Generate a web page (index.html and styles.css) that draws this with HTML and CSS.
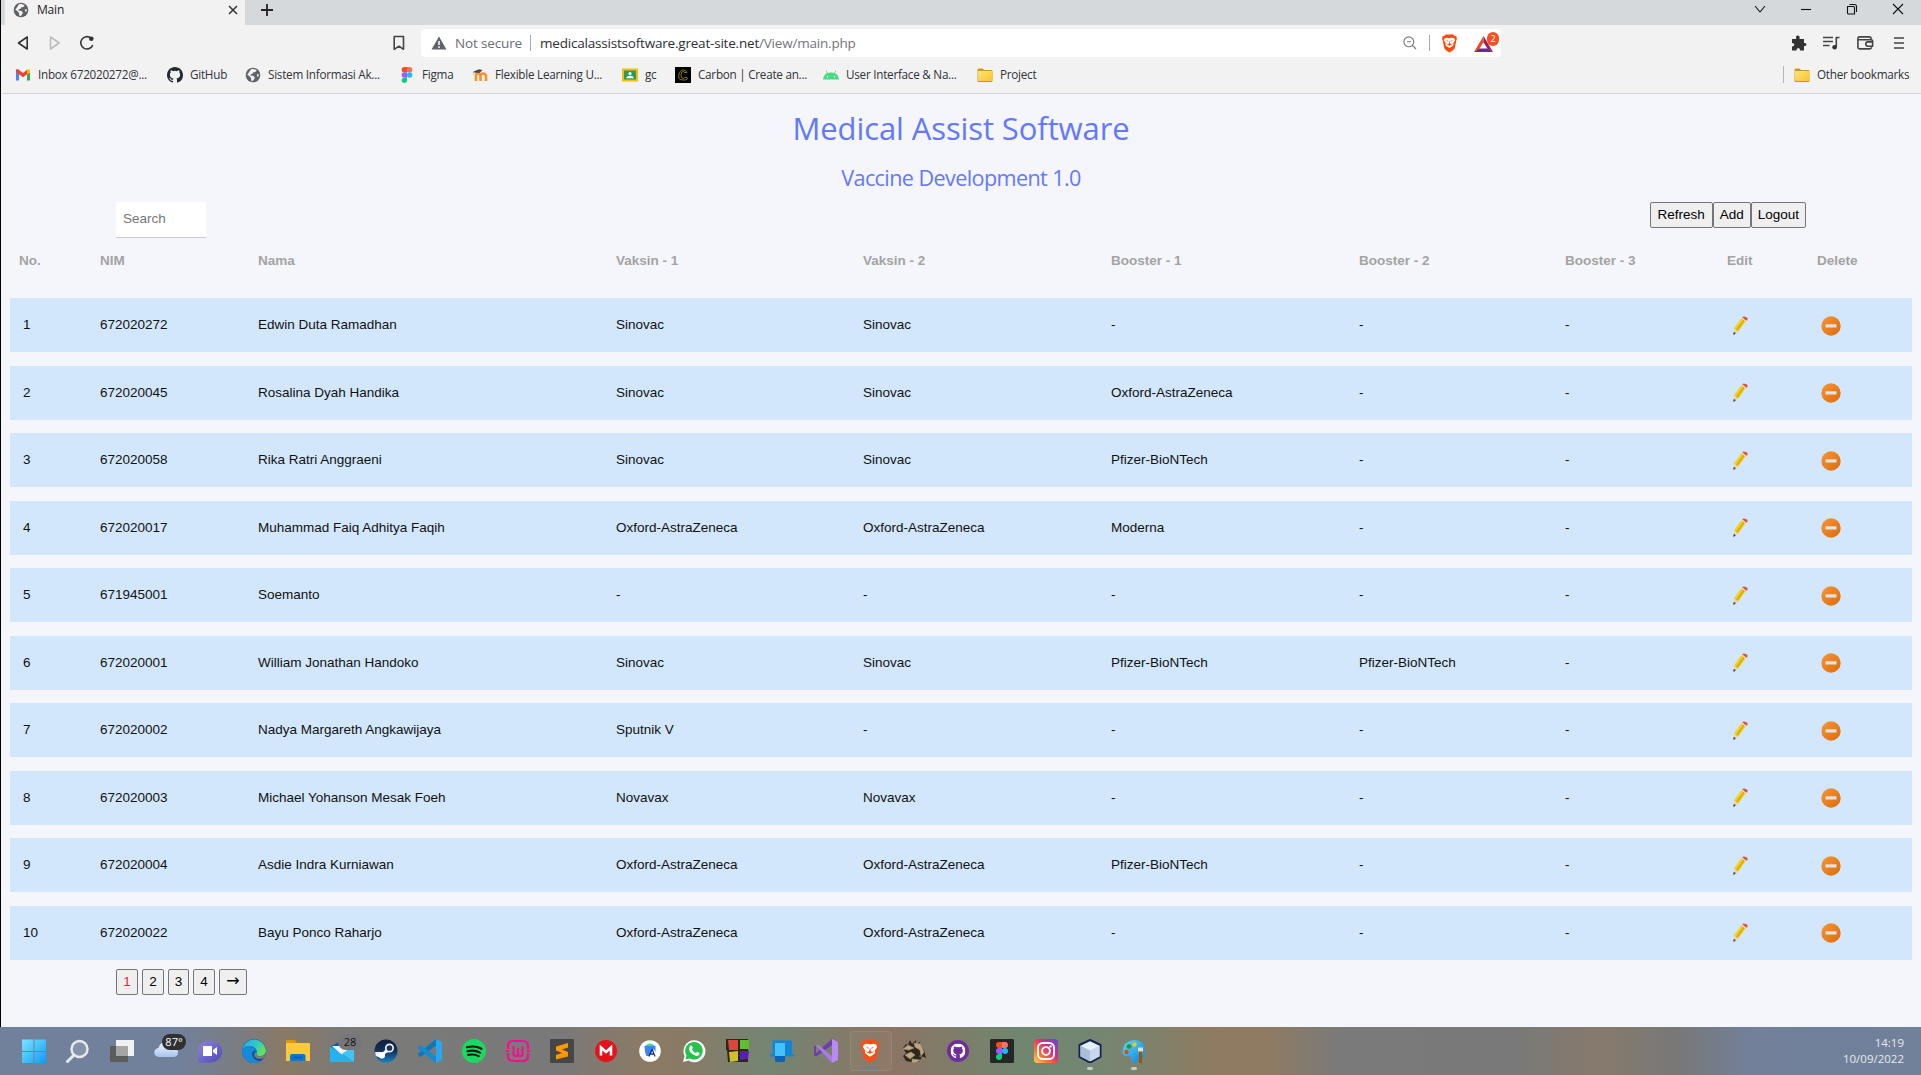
FILE: index.html
```html
<!DOCTYPE html>
<html lang="id">
<head>
<meta charset="utf-8">
<title>Main</title>
<link rel="stylesheet" href="styles.css">
</head>
<body>
<svg class="defs" width="0" height="0">
  <defs>
    <linearGradient id="gOrange" x1="0" y1="0" x2="1" y2="1"><stop offset="0" stop-color="#f5973a"/><stop offset="1" stop-color="#dd6a08"/></linearGradient>
    <linearGradient id="gFolder" x1="0" y1="0" x2="1" y2="1"><stop offset="0" stop-color="#ffe27a"/><stop offset="1" stop-color="#f6c62f"/></linearGradient>
    <linearGradient id="gWin" x1="0" y1="0" x2="1" y2="1"><stop offset="0" stop-color="#7fe3ff"/><stop offset="1" stop-color="#0a9df5"/></linearGradient>
    <linearGradient id="gEdge" x1="0" y1="0" x2="1" y2=".4"><stop offset="0" stop-color="#2aa7e6"/><stop offset=".6" stop-color="#33c6c8"/><stop offset="1" stop-color="#62e05a"/></linearGradient>
    <linearGradient id="gInsta" x1="0" y1="1" x2="1" y2="0"><stop offset="0" stop-color="#ffd35a"/><stop offset=".3" stop-color="#f9762e"/><stop offset=".6" stop-color="#d62f7e"/><stop offset="1" stop-color="#5a4bd6"/></linearGradient>
    <linearGradient id="gChat" x1="0" y1="0" x2="1" y2="1"><stop offset="0" stop-color="#8f86dd"/><stop offset="1" stop-color="#5048b5"/></linearGradient>
    <linearGradient id="gSteam" x1="0" y1="0" x2="0" y2="1"><stop offset="0" stop-color="#111d3c"/><stop offset=".5" stop-color="#12305c"/><stop offset="1" stop-color="#1486bd"/></linearGradient>
    <linearGradient id="gCloud" x1="0" y1="0" x2="0" y2="1"><stop offset="0" stop-color="#f3f8ff"/><stop offset="1" stop-color="#a9c4ee"/></linearGradient>
    <linearGradient id="gPaint" x1="0" y1="0" x2="1" y2="1"><stop offset="0" stop-color="#53dcfa"/><stop offset="1" stop-color="#1280d8"/></linearGradient>
    <symbol id="globe" viewBox="0 0 16 16"><circle cx="8" cy="8" r="7.300" fill="#5f6368"/><path d="M6 2.200c2-.6 4.300 0 5.700 1.300L10 5.200H8.300L7.600 6.800l-2 .6v1.400h2.600l1.600 1.600-.4 1.700-1.700 2-1.600-.5V11L3.700 8.600 2.200 8M13.900 7l-2.200.6.600 1.800 1.100.4" fill="#f2f2f2"/></symbol>
    <symbol id="github" viewBox="0 0 16 16"><path d="M8 0C3.580 0 0 3.580 0 8c0 3.540 2.290 6.530 5.470 7.590.4.070.55-.17.55-.38 0-.19-.01-.82-.01-1.490-2.010.37-2.530-.49-2.690-.94-.09-.23-.48-.94-.82-1.130-.28-.15-.68-.52-.01-.53.63-.01 1.080.58 1.230.82.72 1.210 1.870.87 2.330.66.07-.52.28-.87.51-1.070-1.780-.2-3.640-.89-3.640-3.950 0-.87.31-1.590.82-2.150-.08-.2-.36-1.020.08-2.120 0 0 .67-.21 2.200.82a7.600 7.600 0 0 1 4 0c1.530-1.040 2.200-.82 2.200-.82.44 1.100.16 1.920.08 2.120.51.56.82 1.270.82 2.150 0 3.070-1.870 3.750-3.650 3.950.29.25.54.73.54 1.480 0 1.070-.01 1.930-.01 2.200 0 .21.15.46.55.38A8 8 0 0 0 16 8c0-4.420-3.580-8-8-8z"/></symbol>
    <symbol id="figma" viewBox="0 0 16 24"><path d="M4 0h4v8H4a4 4 0 0 1 0-8z" fill="#f24e1e"/><path d="M8 0h4a4 4 0 0 1 0 8H8z" fill="#ff7262"/><path d="M4 8h4v8H4a4 4 0 0 1 0-8z" fill="#a259ff"/><circle cx="12" cy="12" r="4" fill="#1abcfe"/><path d="M4 16h4v4a4 4 0 1 1-4-4z" fill="#0acf83"/></symbol>
    <symbol id="folder" viewBox="0 0 16 16"><path d="M.5 3Q.5 1.500 2 1.500h3.500L7 3h7.500q1 0 1 1v10q0 1-1 1h-13q-1 0-1-1z" fill="#c99a18"/><path d="M1 4h14.500v9q0 1-1 1h-12.500q-1 0-1-1z" fill="url(#gFolder)"/></symbol>
    <symbol id="brave" viewBox="0 0 16 20"><path d="M4 .5h8l1.500 1.700 1.800.2.500 3.200-.6 1L13.500 15Q13 16.500 8 19.500 3 16.500 2.500 15L.8 6.600.2 5.600.7 2.400l1.800-.2z" fill="#fb4a10"/><path d="M3 4.500 5.500 4 8 4.600l2.500-.6 2.500.5.900 2.200-2 3 .4 1.800-2 1.800L8 14.800l-2.300-1.500-2-1.800.4-1.800-2-3z" fill="#fff"/><path d="m4.500 6.500 2.500.7-.5 1zM11.500 6.500 9 7.200l.5 1zM8 7l.7 3.300 1.300.7-2 1.500-2-1.500 1.300-.7zM5 9.500l1.200 2-.7.600zM11 9.500l-1.200 2 .7.600z" fill="#fb4a10"/></symbol>
    <symbol id="pencil" viewBox="0 0 16 20"><path d="m2 12.600 7.300-10.300 4.300 3L6.300 15.600 2 18.400z" fill="#f3cf22"/><path d="m4 13.900 7.200-10.200 1.400 1L5.400 14.900z" fill="#d9ad00"/><path d="m2 12.600 4.300 3L1.800 18.500z" fill="#ecd5b0"/><path d="m1.600 16 2.300 1-2.400 2.300z" fill="#33383f"/><path d="m9.300 2.300 1.100-1.500 4.300 3-1.100 1.500z" fill="#dfe0e4"/><path d="M10.200 1.200Q11.300-.2 13.900.9t1.400 3.200l-.9.700z" fill="#e4503f"/></symbol>
    <symbol id="minus" viewBox="0 0 20 20"><circle cx="10" cy="10" r="9.700" fill="url(#gOrange)"/><rect x="4.500" y="8.300" width="11" height="3.200" fill="#e4e2e0"/></symbol>
  </defs>
</svg>

<div class="window">
  <header class="tabs">
    <div class="tab">
      <svg class="i16"><use href="#globe"/></svg>
      <span class="tab-title">Main</span>
      <svg width="10" height="10" viewBox="0 0 10 10"><path d="m1 1 8 8M9 1 1 9" stroke="#333" stroke-width="1.500"/></svg>
    </div>
    <svg class="plus" width="12" height="12" viewBox="0 0 12 12"><path d="M6 0v12M0 6h12" stroke="#222" stroke-width="1.800"/></svg>
    <div class="controls">
      <svg width="12" height="12" viewBox="0 0 12 12"><path d="m1 3 5 6 5-6"/></svg>
      <svg width="12" height="12" viewBox="0 0 12 12"><path d="M1 6.500h10"/></svg>
      <svg width="12" height="12" viewBox="0 0 12 12"><path d="M1.500 3.500h6q1 0 1 1v6.500h-6q-1 0-1-1zM3.500 1.500h5q2 0 2 2V9"/></svg>
      <svg width="12" height="12" viewBox="0 0 12 12"><path d="m1 1 10 10M11 1 1 11"/></svg>
    </div>
  </header>

  <nav class="toolbar">
    <div class="nav-buttons">
      <svg width="12" height="16" viewBox="0 0 12 16"><path d="M10.200 2v12L1.500 8z" fill="none" stroke="#333" stroke-width="1.600" stroke-linejoin="round"/></svg>
      <svg width="12" height="16" viewBox="0 0 12 16"><path d="M1.500 2v12l8.700-6z" fill="none" stroke="#bbb" stroke-width="1.600" stroke-linejoin="round"/></svg>
      <svg class="reload" width="16" height="16" viewBox="0 0 16 16"><path d="M12 3.100A6.200 6.200 0 1 0 13.800 10" fill="none" stroke="#333" stroke-width="1.600"/><circle cx="12.300" cy="3.800" r="2.300" fill="#333"/></svg>
    </div>
    <svg class="save" width="12" height="16" viewBox="0 0 12 16"><path d="M1.200 1.500h9.300v12.800L6 11.200l-4.800 3.100z" fill="none" stroke="#444" stroke-width="1.600" stroke-linejoin="round"/></svg>
    <div class="address">
      <svg width="16" height="14" viewBox="0 0 16 14"><path d="M8 .5 15.500 13.500H.5z" fill="#5f6368"/><path d="M8 5v4M8 10.200v1.700" stroke="#fff" stroke-width="1.500"/></svg>
      <span class="insecure">Not secure</span>
      <i class="bar"></i>
      <span class="url"><b>medicalassistsoftware.great-site.net</b>/View/main.php</span>
      <svg class="lens" width="14" height="14" viewBox="0 0 14 14"><path d="M9.200 9.200 13 13M4 5.800h4M10.700 5.800a4.900 4.900 0 1 1-9.800 0 4.900 4.900 0 0 1 9.800 0z" fill="none" stroke="#777" stroke-width="1.100"/></svg>
      <i class="bar"></i>
      <svg class="shield" width="17" height="19"><use href="#brave"/></svg>
      <div class="rewards">
        <svg width="19" height="16" viewBox="0 0 19 16"><path d="M9.500 0 0 16l5.500-3.300 4-6.500z" fill="#ef4b22"/><path d="m9.500 0 9.500 16-5.500-3.300-4-6.500z" fill="#9c1f60"/><path d="M0 16h19l-5.500-3.600h-8z" fill="#672b96"/></svg>
        <span class="badge">2</span>
      </div>
    </div>
    <div class="extras">
      <svg width="16" height="16" viewBox="0 0 16 16"><path d="M1 4h4.200q-.8-3.500 1.600-3.500T8.500 4H13v4q2.500-.4 2.500 1.500T13 11v4.500H9q.3-2.500-1.700-2.500T5.500 15.500H1v-4q2.400 0 2.400-1.700T1 8z" fill="#333"/></svg>
      <svg width="17" height="14" viewBox="0 0 17 14"><path d="M0 1.500h10M0 5.500h10M0 9.500h6.500M13 1.500h3.500M13.300 1v10" stroke="#444" stroke-width="1.600"/><circle cx="11.600" cy="11.200" r="2.300" fill="#333"/></svg>
      <svg width="17" height="14" viewBox="0 0 17 14"><path d="M14 4V2.500q0-1.600-1.600-1.600H2.500Q.9.900.9 2.500v8.800q0 1.600 1.600 1.600h10.300q1.600 0 1.600-1.600M1 3.700h13q1.600 0 1.600 1.300v5.300H11a2.200 2.200 0 0 1 0-4.400h4" fill="none" stroke="#444" stroke-width="1.600"/></svg>
      <svg width="10" height="14" viewBox="0 0 10 14"><path d="M0 2h10M0 7h10M0 12h10" stroke="#444" stroke-width="1.600"/></svg>
    </div>
  </nav>

  <nav class="bookmarks">
    <a class="mark"><svg class="i16" viewBox="0 0 16 16"><path d="M1 3.500v10h3V7z" fill="#4285f4"/><path d="M15 3.500v10h-3V7z" fill="#34a853"/><path d="M1 3q.5-1.500 2.500-.5L8 6l4.500-3.500V7L8 10.300 1 5z" fill="#ea4335"/><path d="M12 3q2.500-1.500 3 0v2.500L12 7.500z" fill="#fbbc04"/></svg><span>Inbox 672020272@...</span></a>
    <a class="mark"><svg class="i16 dark"><use href="#github"/></svg><span>GitHub</span></a>
    <a class="mark"><svg class="i16"><use href="#globe"/></svg><span>Sistem Informasi Ak...</span></a>
    <a class="mark"><svg class="i16"><use href="#figma"/></svg><span>Figma</span></a>
    <a class="mark"><svg class="i16" viewBox="0 0 16 16"><path d="M4 14V8.500q0-2 2-2t2.500 2V14m0-5.500q0-2 2.500-2t3 2V14" fill="none" stroke="#f7922d" stroke-width="2.600"/><path d="M1.500 4.500 7 2.300l3.500.8L7.500 6 2 5.500V9" fill="#4a4a4a"/></svg><span>Flexible Learning U...</span></a>
    <a class="mark"><svg class="i16" viewBox="0 0 16 16"><path d="M0 1.500h16v13H0z" fill="#f7bd0b"/><path d="M2 3.500h12v9H2z" fill="#2a9b5a"/><circle cx="8" cy="6.500" r="1.600" fill="#fff"/><path d="M4.300 11.200q0-2.500 3.700-2.500t3.700 2.500z" fill="#fff"/></svg><span>gc</span></a>
    <a class="mark"><svg class="i16" viewBox="0 0 16 16"><path d="M0 0h16v16H0z" fill="#000"/><path d="M12 5.500Q11.500 3 8.200 3T3.800 8t4.400 5T12 10.500H9.500q-.2 1-1.400 1Q6 11.500 6 8t2.100-3.500q1.200 0 1.400 1z" fill="none" stroke="#8a7a12"/></svg><span>Carbon | Create an...</span></a>
    <a class="mark"><svg class="i16" viewBox="0 0 16 16"><path d="M0 12.500Q.5 8 4 6.300L2.800 4l.6-.4L4.800 6q3-1 6.400 0l1.400-2.400.6.400L12 6.300Q15.500 8 16 12.500z" fill="#4bd983"/><circle cx="4.500" cy="9.700" r=".7" fill="#fff"/><circle cx="11.500" cy="9.700" r=".7" fill="#fff"/></svg><span>User Interface &amp; Na...</span></a>
    <a class="mark"><svg class="i16"><use href="#folder"/></svg><span>Project</span></a>
    <a class="mark other"><svg class="i16"><use href="#folder"/></svg><span>Other bookmarks</span></a>
  </nav>

  <main class="page">
    <h1>Medical Assist Software</h1>
    <h2>Vaccine Development 1.0</h2>
    <div class="actions">
      <input class="search" type="text" placeholder="Search">
      <div class="buttons"><button>Refresh</button><button>Add</button><button>Logout</button></div>
    </div>
    <div class="row head"><span>No.</span><span>NIM</span><span>Nama</span><span>Vaksin - 1</span><span>Vaksin - 2</span><span>Booster - 1</span><span>Booster - 2</span><span>Booster - 3</span><span>Edit</span><span>Delete</span></div>
    <div class="rows">
      <div class="row"><span>1</span><span>672020272</span><span>Edwin Duta Ramadhan</span><span>Sinovac</span><span>Sinovac</span><span>-</span><span>-</span><span>-</span><svg class="edit"><use href="#pencil"/></svg><svg class="delete"><use href="#minus"/></svg></div>
      <div class="row"><span>2</span><span>672020045</span><span>Rosalina Dyah Handika</span><span>Sinovac</span><span>Sinovac</span><span>Oxford-AstraZeneca</span><span>-</span><span>-</span><svg class="edit"><use href="#pencil"/></svg><svg class="delete"><use href="#minus"/></svg></div>
      <div class="row"><span>3</span><span>672020058</span><span>Rika Ratri Anggraeni</span><span>Sinovac</span><span>Sinovac</span><span>Pfizer-BioNTech</span><span>-</span><span>-</span><svg class="edit"><use href="#pencil"/></svg><svg class="delete"><use href="#minus"/></svg></div>
      <div class="row"><span>4</span><span>672020017</span><span>Muhammad Faiq Adhitya Faqih</span><span>Oxford-AstraZeneca</span><span>Oxford-AstraZeneca</span><span>Moderna</span><span>-</span><span>-</span><svg class="edit"><use href="#pencil"/></svg><svg class="delete"><use href="#minus"/></svg></div>
      <div class="row"><span>5</span><span>671945001</span><span>Soemanto</span><span>-</span><span>-</span><span>-</span><span>-</span><span>-</span><svg class="edit"><use href="#pencil"/></svg><svg class="delete"><use href="#minus"/></svg></div>
      <div class="row"><span>6</span><span>672020001</span><span>William Jonathan Handoko</span><span>Sinovac</span><span>Sinovac</span><span>Pfizer-BioNTech</span><span>Pfizer-BioNTech</span><span>-</span><svg class="edit"><use href="#pencil"/></svg><svg class="delete"><use href="#minus"/></svg></div>
      <div class="row"><span>7</span><span>672020002</span><span>Nadya Margareth Angkawijaya</span><span>Sputnik V</span><span>-</span><span>-</span><span>-</span><span>-</span><svg class="edit"><use href="#pencil"/></svg><svg class="delete"><use href="#minus"/></svg></div>
      <div class="row"><span>8</span><span>672020003</span><span>Michael Yohanson Mesak Foeh</span><span>Novavax</span><span>Novavax</span><span>-</span><span>-</span><span>-</span><svg class="edit"><use href="#pencil"/></svg><svg class="delete"><use href="#minus"/></svg></div>
      <div class="row"><span>9</span><span>672020004</span><span>Asdie Indra Kurniawan</span><span>Oxford-AstraZeneca</span><span>Oxford-AstraZeneca</span><span>Pfizer-BioNTech</span><span>-</span><span>-</span><svg class="edit"><use href="#pencil"/></svg><svg class="delete"><use href="#minus"/></svg></div>
      <div class="row"><span>10</span><span>672020022</span><span>Bayu Ponco Raharjo</span><span>Oxford-AstraZeneca</span><span>Oxford-AstraZeneca</span><span>-</span><span>-</span><span>-</span><svg class="edit"><use href="#pencil"/></svg><svg class="delete"><use href="#minus"/></svg></div>
    </div>
    <div class="pager"><button class="current">1</button><button>2</button><button>3</button><button>4</button><button class="next">→</button></div>
  </main>
</div>

<footer class="taskbar">
  <div class="app"><svg viewBox="0 0 24 24"><path d="M0 .5h11.500V12H0zM12.500.5H24V12H12.500zM0 13h11.500v11H0zM12.500 13H24v11H12.500z" fill="url(#gWin)"/></svg></div>
  <div class="app"><svg viewBox="0 0 24 24"><path d="m7.500 16.500-6 6" stroke="#e6e8ec" stroke-width="3" stroke-linecap="round"/><circle cx="13.500" cy="10" r="8" fill="#9aa5b6" fill-opacity=".5" stroke="#e8eaee" stroke-width="2.400"/></svg></div>
  <div class="app"><svg viewBox="0 0 24 24"><path d="M6 1h18v16H6z" fill="#f1f1f1"/><path d="M0 7h18v16H0z" fill="#5c5c5c"/><path d="M6 7h12v10H6z" fill="#a5a5a5"/></svg></div>
  <div class="app"><svg viewBox="0 0 24 24"><path d="M5 18a4.500 4.500 0 0 1-.5-9Q6 3 12 3t7 6q5 .5 5 4.500T19.500 18z" fill="url(#gCloud)"/></svg><span class="count warm">87°</span></div>
  <div class="app"><svg viewBox="0 0 24 24"><path d="M0 24V12A12 11 0 1 1 12 23.500z" fill="url(#gChat)"/><path d="M5 7h9v10H5zM15 11l4-3v8l-4-3z" fill="#fff"/></svg></div>
  <div class="app"><svg viewBox="0 0 24 24"><circle cx="12" cy="12" r="12" fill="#0c62b4"/><path d="M.3 10A12 12 0 0 1 24 11.500Q23.500 17 18 17q-4.500 0-3.500-3 1-2.500-1-4.500Q10 6 5.500 7.500 2 8.500.3 10z" fill="url(#gEdge)"/><path d="M0 12Q.5 7 6.500 7t7.500 5q-4-1-4 3 1 5 7 6l2 .5A12 12 0 0 1 0 12z" fill="#178bd8"/><path d="M14 11.500q-3 2-1.500 5t6 3l3.500-1-3 3.500q-6 0-8-4t3-6.500z" fill="#0f4f97"/><path d="M14.500 14q-.2 3 4 3.300 3 0 5-2.300l-1.700 4Q15 21.500 12.500 17.500q-1-2.500 1.500-5z" fill="#7b7b79"/></svg></div>
  <div class="app"><svg viewBox="0 0 24 24"><path d="M0 2q0-1 1-1h8l2 3H0z" fill="#dd9a05"/><path d="M0 4h23q1 0 1 1v17H0z" fill="#fbc93d"/><path d="M4 22v-5q0-2 2-2h11.500q2 0 2 2v5z" fill="#1376cb"/><path d="M7 18.500h9.500" stroke="#0b58a5" stroke-width="1.500"/></svg></div>
  <div class="app"><svg viewBox="0 0 24 24"><path d="M0 8 12 1v13z" fill="#0b5cab"/><path d="M0 8h24v15H0z" fill="#1b9be6"/><path d="M2 7h20L12 16z" fill="#f1f3f5"/><path d="M0 8v15h24z" fill="#26b1ef"/><path d="m12 14.500 12-6.500v15z" fill="#44c4f5"/></svg><span class="count mail">28</span></div>
  <div class="app"><svg viewBox="0 0 24 24"><circle cx="12" cy="12" r="11.500" fill="url(#gSteam)"/><path d="m1 13 .8 4L8 19.500l3-4.500 5-3-3-3-4 4z" fill="#eef1f5"/><circle cx="8" cy="16.500" r="3" fill="#fff"/><circle cx="15.500" cy="9" r="3.700" fill="#17335c" stroke="#f0f3f6" stroke-width="1.700"/></svg></div>
  <div class="app"><svg viewBox="0 0 24 24"><path d="m18 0 6 3v18l-6 3z" fill="#27a7ef"/><path d="M18 0v6.500L2.500 18 0 16v-1.200z" fill="#0d77bd"/><path d="M18 24v-6.500L2.500 6 0 8v1.200z" fill="#1689d3"/></svg></div>
  <div class="app"><svg viewBox="0 0 24 24"><circle cx="12" cy="12" r="12" fill="#1ed760"/><path d="M5 8.200q8-2 14.500 1.600M5.500 12.200q7-1.700 12.500 1.400M6.200 15.900q6-1.200 10.500 1.200" fill="none" stroke="#101a13" stroke-width="2.200" stroke-linecap="round"/></svg></div>
  <div class="app"><svg viewBox="0 0 24 24"><path d="M2 10V7q0-5 5-5h10q5 0 5 5v3M2 14v3q0 5 5 5h10q5 0 5-5v-3" fill="none" stroke="#fb0a94" stroke-width="2.200"/><path d="M0 12h3M21 12h3M7.500 7v8q0 2 2.300 2t2.200-2V9v6q0 2 2.300 2t2.200-2V7" fill="none" stroke="#fb0a94" stroke-width="2"/></svg></div>
  <div class="app"><svg viewBox="0 0 24 24"><rect width="24" height="24" rx="1" fill="#464646"/><path d="M18 4v4.500l-6 2 6 2.500v4.500L6 20.500V16l6-2-6-2.500V7.500z" fill="#ff9800"/></svg></div>
  <div class="app"><svg viewBox="0 0 24 24"><circle cx="12" cy="12" r="11" fill="#e3131b"/><path d="M7 16.500v-8l5 4.500 5-4.500v8" fill="none" stroke="#fff" stroke-width="2.600"/></svg></div>
  <div class="app"><svg viewBox="0 0 24 24"><circle cx="12" cy="12" r="10.800" fill="#fff"/><path d="M7.500 6.500q4.500-4 9 0v2h-9z" fill="#3ddc84"/><path d="M6.500 7h11v6l-2-3-4 7h-3q-2-4-2-10z" fill="#3f84f1"/><path d="m14 10-3 7.500M14 10l3 7.500M12 15h4.500" stroke="#163a70" stroke-width="1.300"/></svg></div>
  <div class="app"><svg viewBox="0 0 24 24"><path d="M1 23 2.500 17a11 11 0 1 1 4 4.500z" fill="#fff"/><path d="m3.500 20.500 1-4a8.800 8.800 0 1 1 3.200 3z" fill="#25c24d"/><path d="M8 7q1.500-1.500 2.500.8l.4 1.200-1 1.500q1.500 2.500 4 3.500l1.400-1.300 2.400 1.300q.3 2-2 2.800-3 .7-6.500-2.800T8 7z" fill="#fff"/></svg></div>
  <div class="app"><svg viewBox="0 0 24 24"><path d="M0 0h22v11H0zM1 11h21v12H2z" fill="#2a2620"/><path d="m2 1 10 0v10H3z" fill="#d9483a"/><path d="M14 1h9v9h-9z" fill="#5fbf30"/><path d="m3 13 9-1v10l-8 1z" fill="#c7c22d"/><path d="M14 12h9l-1 8-8 1z" fill="#5520b4"/></svg></div>
  <div class="app"><svg viewBox="0 0 24 24"><path d="M2.500 1.500h19.500V15h2v2.500H.5V15h2z" fill="#1385d5"/><path d="M5 4h10v18q0 1-1 1H6q-1 0-1-1z" fill="#45c3f5"/><path d="M5 17h10v5q0 1-1 1H6q-1 0-1-1z" fill="#0b63b5"/></svg></div>
  <div class="app"><svg viewBox="0 0 24 24"><path d="m0 7.500 2-1v11L0 16z" fill="#6a3fae"/><path d="m0 16 2.500 1.500L18 6V0z" fill="#6a3fae"/><path d="m2 6.500 3-.5 13 11.500V24z" fill="#a77be6"/><path d="m18 0 6 3v18l-6 3z" fill="#b78af5"/></svg></div>
  <div class="app active"><svg viewBox="0 0 24 24"><use href="#brave" x="2" width="20" height="24"/></svg></div>
  <div class="app"><svg viewBox="0 0 24 24"><path d="m1 9 3-4 2 1 2-5 2 4 4-4v4l4-2-1 4 5 4 2 8-4-1-3 5H9l-5-1-3-5 3-3z" fill="#30281f"/><path d="m1 10 5-4 6 3-5 2zM3 16l6-3 4 3-5 4zM12 4l6 1 4 8-3 4-1-6-5-3zM10 20l8 1-3 2-5 .5zM17 17l6 2" fill="#bca681" stroke="#aa9673" stroke-width=".6"/></svg></div>
  <div class="app"><svg viewBox="0 0 24 24"><circle cx="12" cy="12" r="11" fill="#6e2f9c"/><svg x="4.500" y="4.500" width="15" height="15" fill="#fff"><use href="#github"/></svg></svg></div>
  <div class="app"><svg viewBox="0 0 24 24"><rect width="24" height="24" rx="1.500" fill="#262626"/><use href="#figma" x="6" y="3" width="12" height="18"/></svg></div>
  <div class="app"><svg viewBox="0 0 24 24"><rect width="24" height="24" rx="3.500" fill="url(#gInsta)"/><rect x="4" y="4" width="16" height="16" rx="4.500" fill="none" stroke="#fff" stroke-width="1.900"/><circle cx="12" cy="12" r="3.900" fill="none" stroke="#fff" stroke-width="1.900"/><circle cx="16.600" cy="7.400" r="1.200" fill="#fff"/></svg></div>
  <div class="app running"><svg viewBox="0 0 24 24"><path d="m12 1 10.500 5v12L12 23.500 1.500 18V6z" fill="#e6f0f8" stroke="#16234d" stroke-width="2"/><path d="m2.500 6.500 9.500 5v11l-9.500-5z" fill="#a9bfda"/><path d="m21.500 6.500-9.500 5v11l9.500-5z" fill="#c8d8ea"/></svg></div>
  <div class="app running"><svg viewBox="0 0 24 24"><path d="M12 1Q22 1 23 10q0 11-9 13-6 1-5-4 0-3-3-2-5 1-5.500-4Q1 2 12 1z" fill="url(#gPaint)"/><circle cx="4.500" cy="13" r="2.200" fill="#e4471d"/><circle cx="7" cy="7.500" r="2.300" fill="#24952f"/><circle cx="12.500" cy="5.500" r="2.200" fill="#f7c41b"/><path d="M17 12h3v12h-3z" fill="#9a570e"/><path d="M16 8.500h5v4h-5z" fill="#e9d9bd"/></svg></div>
  <div class="clock"><span>14:19</span><span>10/09/2022</span></div>
</footer>
</body>
</html>
```
FILE: styles.css
```css
* { box-sizing: border-box; }
body {
  margin: 0;
  width: 1921px;
  height: 1075px;
  overflow: hidden;
  display: flex;
  flex-direction: column;
  font-family: "Open Sans", "Noto Sans", sans-serif;
  background: #f5f6fb;
}
svg { display: block; flex: none; }
.defs { position: absolute; }
.i16 { width: 16px; height: 16px; }
.dark { fill: #24292f; }

.window {
  height: 1027px;
  border-left: 1px solid #000;
  display: flex;
  flex-direction: column;
}

/* browser chrome */
.tabs {
  height: 25px;
  background: #d5d9dc;
  display: flex;
  padding-left: 4px;
}
.tab {
  width: 240px;
  background: #f2f2f2;
  display: flex;
  align-items: center;
  padding: 0 7px 5px 8px;
}
.tab-title {
  flex: 1;
  margin: -1px 0 0 8px;
  font-size: 12px;
  letter-spacing: -0.2px;
  color: #222;
}
.plus { margin: 4px 0 0 16px; }
.controls {
  margin: 3px 17px 0 auto;
  display: flex;
  gap: 34px;
}
.controls path { fill: none; stroke: #111; stroke-width: 1.1; }

.toolbar {
  height: 36px;
  background: #f2f2f2;
  display: flex;
  align-items: center;
}
.nav-buttons { display: flex; gap: 20px; width: 392px; padding-left: 16px; }
.reload { margin-left: -2px; }
.save { margin-right: 16px; }
.address {
  width: 1080px;
  height: 28px;
  background: #fff;
  border-radius: 4px;
  display: flex;
  align-items: center;
  padding: 0 1px 0 10px;
  font-size: 13.5px;
  color: #6b6e72;
}
.insecure { margin-left: 8px; width: 75px; letter-spacing: -0.15px; white-space: nowrap; }
.bar { width: 1px; height: 16px; background: #aaa; }
.url { margin-left: 9px; color: #73767a; letter-spacing: -0.2px; white-space: nowrap; }
.url b { font-weight: 400; color: #2c2f33; }
.lens { margin: 0 12px 0 auto; }
.shield { margin: 0 16px 0 11px; }
.rewards { position: relative; width: 26px; padding-top: 1px; }
.badge {
  position: absolute;
  left: 13px;
  top: -3px;
  width: 12px;
  height: 14px;
  border-radius: 6px;
  background: #f5501f;
  color: #fff;
  font-size: 9px;
  line-height: 14px;
  text-align: center;
}
.extras {
  margin-left: auto;
  padding-right: 17px;
  display: flex;
  align-items: center;
  gap: 16px;
}
.extras svg:first-child { margin-right: -1px; }
.extras svg:nth-child(n+2) { margin-left: 1px; }
.extras svg:nth-child(n+4) { margin-left: 4px; }

.bookmarks {
  height: 33px;
  background: #f2f2f2;
  border-bottom: 1px solid #d2d5d8;
  display: flex;
  padding: 5px 0 0 14px;
  gap: 17px;
}
.mark {
  display: flex;
  gap: 7px;
  height: 17px;
  align-items: center;
  font-size: 11.7px;
  letter-spacing: -0.25px;
  white-space: nowrap;
  color: #303338;
}
.mark span { margin-top: -1px; }
.mark:nth-child(1) { width: 135px; }
.mark:nth-child(2) { width: 61px; }
.mark:nth-child(3) { width: 137px; }
.mark:nth-child(4) { width: 56px; }
.mark:nth-child(5) { width: 133px; }
.mark:nth-child(6) { width: 36px; }
.mark:nth-child(7) { width: 131px; }
.mark:nth-child(8) { width: 137px; }
.other {
  margin-left: auto;
  width: 138px;
  padding-left: 10px;
  border-left: 1px solid #b5b7ba;
}

/* page */
.page {
  flex: 1;
  display: flex;
  flex-direction: column;
  font-family: "Liberation Sans", Arial, sans-serif;
  font-size: 13.5px;
  color: #111;
}
h1, h2 {
  margin: 0;
  font-family: "Open Sans", "Noto Sans", sans-serif;
  font-weight: 400;
  text-align: center;
  color: #6478fa;
}
h1 { margin-top: 11px; font-size: 31px; line-height: 46px; letter-spacing: -0.1px; }
h2 { margin-top: 11px; font-size: 21.6px; line-height: 32px; letter-spacing: -0.6px; }
.actions {
  display: flex;
  justify-content: space-between;
  align-items: flex-start;
  height: 46px;
  margin-top: 8px;
  padding: 0 115px;
}
.search {
  width: 90px;
  height: 36px;
  border: 0;
  border-bottom: 1px solid #ccc;
  padding: 0 7px 3px;
  font: inherit;
  background: #fff;
}
.search::placeholder { color: #757575; }
.buttons { display: flex; }
button {
  height: 26px;
  border: 1px solid #767676;
  border-radius: 2px;
  background: #efefef;
  font: inherit;
  color: #000;
  padding: 0 6px 2px;
}
.buttons button:first-child { padding-right: 7px; }
.row {
  display: grid;
  grid-template-columns: 81px 158px 358px 247px 248px 248px 206px 162px 90px 104px;
  width: 1902px;
  height: 54px;
  padding-left: 9px;
  align-items: center;
}
.head {
  margin-left: 9px;
  height: 50px;
  align-items: start;
  padding-top: 4px;
  font-weight: 700;
  color: #a3a3a3;
}
.head span { line-height: 17px; }
.rows {
  margin-left: 9px;
  height: 662px;
  display: flex;
  flex-direction: column;
  justify-content: space-between;
}
.rows .row { background: #d2e7fc; }
.rows .row span { padding-bottom: 1px; white-space: nowrap; }
.rows .row span:first-child { padding-left: 4px; }
.edit { width: 16px; height: 20px; margin: 1px 0 0 5px; }
.delete { width: 20px; height: 20px; margin-left: 4px; margin-top: 1px; }
.pager { display: flex; gap: 4px; margin: 9px 0 0 115px; }
.pager button { width: 22px; padding: 0 0 2px; }
.pager .current { color: #fa0f4b; }
.pager button:nth-child(3) { width: 21px; }
.pager .next { width: 28px; font-family: "DejaVu Sans", sans-serif; font-size: 16px; line-height: 20px; }

/* taskbar */
.taskbar {
  height: 48px;
  display: flex;
  padding: 0 17px 0 12px;
  background: linear-gradient(90deg, #71819b 0, #71819b 180px, #7c7c7e 245px, #8a7965 285px, #7a7a78 345px, #797979 560px, #8c7a64 650px, #8a7a65 680px, #748573 770px, #8c7463 890px, #70866f 1020px, #748673 1095px, #8e7b61 1215px, #8e7b62 1270px, #7a7a7a 1340px, #797979 1510px, #867a6c 1600px, #787878 1680px, #72809a 1750px, #71819a);
}
.app {
  position: relative;
  width: 44px;
  display: flex;
  align-items: center;
  justify-content: center;
}
.app > svg { width: 24px; height: 24px; }
.count {
  position: absolute;
  top: 7px;
  left: 18px;
  width: 24px;
  height: 16px;
  border-radius: 8px;
  font-size: 11px;
  line-height: 16px;
  text-align: center;
}
.warm { background: #303030; color: #fff; }
.mail { background: #77777a; color: #111; }
.active::before {
  content: "";
  position: absolute;
  inset: 4px 0 4px 2px;
  border: 1px solid #ffffff14;
  border-radius: 4px;
  background: #ffffff08;
}
.active::after, .running::after {
  content: "";
  position: absolute;
  left: 19px;
  bottom: 5px;
  width: 6px;
  height: 3px;
  border-radius: 2px;
  background: #c9cbc5;
}
.active::after { left: 14px; width: 16px; background: #737d88; }
.clock {
  margin-left: auto;
  padding-top: 8px;
  display: flex;
  flex-direction: column;
  align-items: flex-end;
  font-size: 11.5px;
  line-height: 16px;
  color: #e6e9ef;
}
```
